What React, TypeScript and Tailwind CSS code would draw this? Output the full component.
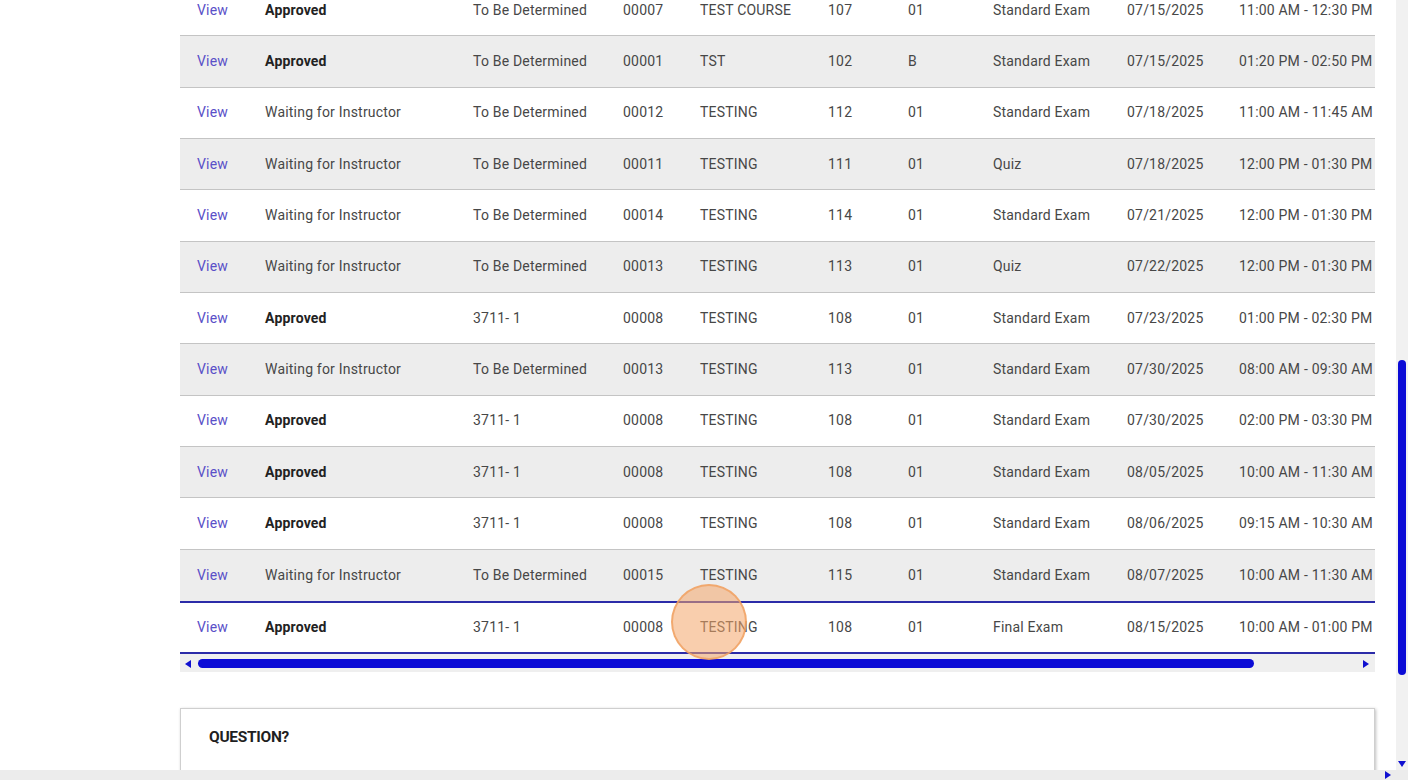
import React from "react";

type Row = {
  status: string;
  bold: boolean;
  loc: string;
  id: string;
  course: string;
  num: string;
  sec: string;
  type: string;
  date: string;
  time: string;
};

const rows: Row[] = [
  { status: "Approved", bold: true, loc: "To Be Determined", id: "00007", course: "TEST COURSE", num: "107", sec: "01", type: "Standard Exam", date: "07/15/2025", time: "11:00 AM - 12:30 PM" },
  { status: "Approved", bold: true, loc: "To Be Determined", id: "00001", course: "TST", num: "102", sec: "B", type: "Standard Exam", date: "07/15/2025", time: "01:20 PM - 02:50 PM" },
  { status: "Waiting for Instructor", bold: false, loc: "To Be Determined", id: "00012", course: "TESTING", num: "112", sec: "01", type: "Standard Exam", date: "07/18/2025", time: "11:00 AM - 11:45 AM" },
  { status: "Waiting for Instructor", bold: false, loc: "To Be Determined", id: "00011", course: "TESTING", num: "111", sec: "01", type: "Quiz", date: "07/18/2025", time: "12:00 PM - 01:30 PM" },
  { status: "Waiting for Instructor", bold: false, loc: "To Be Determined", id: "00014", course: "TESTING", num: "114", sec: "01", type: "Standard Exam", date: "07/21/2025", time: "12:00 PM - 01:30 PM" },
  { status: "Waiting for Instructor", bold: false, loc: "To Be Determined", id: "00013", course: "TESTING", num: "113", sec: "01", type: "Quiz", date: "07/22/2025", time: "12:00 PM - 01:30 PM" },
  { status: "Approved", bold: true, loc: "3711- 1", id: "00008", course: "TESTING", num: "108", sec: "01", type: "Standard Exam", date: "07/23/2025", time: "01:00 PM - 02:30 PM" },
  { status: "Waiting for Instructor", bold: false, loc: "To Be Determined", id: "00013", course: "TESTING", num: "113", sec: "01", type: "Standard Exam", date: "07/30/2025", time: "08:00 AM - 09:30 AM" },
  { status: "Approved", bold: true, loc: "3711- 1", id: "00008", course: "TESTING", num: "108", sec: "01", type: "Standard Exam", date: "07/30/2025", time: "02:00 PM - 03:30 PM" },
  { status: "Approved", bold: true, loc: "3711- 1", id: "00008", course: "TESTING", num: "108", sec: "01", type: "Standard Exam", date: "08/05/2025", time: "10:00 AM - 11:30 AM" },
  { status: "Approved", bold: true, loc: "3711- 1", id: "00008", course: "TESTING", num: "108", sec: "01", type: "Standard Exam", date: "08/06/2025", time: "09:15 AM - 10:30 AM" },
  { status: "Waiting for Instructor", bold: false, loc: "To Be Determined", id: "00015", course: "TESTING", num: "115", sec: "01", type: "Standard Exam", date: "08/07/2025", time: "10:00 AM - 11:30 AM" },
];

const last: Row = { status: "Approved", bold: true, loc: "3711- 1", id: "00008", course: "TESTING", num: "108", sec: "01", type: "Final Exam", date: "08/15/2025", time: "10:00 AM - 01:00 PM" };

const gridCols =
  "grid grid-cols-[85px_208px_150px_77px_128px_80px_85px_134px_112px_1fr] items-center";

function Cells({ r }: { r: Row }) {
  return (
    <>
      <div className="pl-[17px] text-[#5a50c8]">View</div>
      <div className={r.bold ? "font-bold text-[#222]" : ""}>{r.status}</div>
      <div>{r.loc}</div>
      <div>{r.id}</div>
      <div>{r.course}</div>
      <div>{r.num}</div>
      <div>{r.sec}</div>
      <div>{r.type}</div>
      <div>{r.date}</div>
      <div className="whitespace-nowrap">{r.time}</div>
    </>
  );
}

export default function App() {
  return (
    <div
      className="w-[1408px] h-[780px] overflow-hidden bg-white flex flex-col text-[14px] text-[#474747]"
      style={{ fontFamily: "Roboto, 'Liberation Sans', sans-serif" }}
    >
      <div className="flex flex-1 min-h-0">
        <div className="flex-1 min-w-0 overflow-hidden pl-[180px] pr-[21px]">
          <div className="-mt-[15px] tracking-[0.2px]">
            {rows.map((r, i) => (
              <div
                key={i}
                className={`${gridCols} h-[51.33px] border-b border-[#c4c4c4] ${
                  i % 2 === 1 ? "bg-[#ededed]" : "bg-white"
                } ${i === rows.length - 1 ? "border-b-0" : ""}`}
              >
                <Cells r={r} />
              </div>
            ))}
            <div className={`${gridCols} relative h-[53px] border-y-2 border-[#2b2ba8] bg-white`}>
              <Cells r={last} />
              <div className="absolute left-[491px] top-[-19px] w-[76px] h-[76px] rounded-full bg-[#f4a66a]/55 border-2 border-[#f0a060]/80" />
            </div>
            <div className="h-[18px] bg-[#efefef] flex items-center pl-[5px] pr-[4px] pt-[2px]">
              <svg width="6" height="8" viewBox="0 0 6 8" className="shrink-0">
                <path d="M6 0 L0 4 L6 8 Z" fill="#1010d0" />
              </svg>
              <div className="ml-[7px] w-[1056px] h-[9px] rounded-full bg-[#0b0bd6]" />
              <div className="flex-1" />
              <svg width="6" height="8" viewBox="0 0 6 8" className="shrink-0 mr-[2px]">
                <path d="M0 0 L6 4 L0 8 Z" fill="#1010d0" />
              </svg>
            </div>
            <div className="mt-[36px] h-[80px] border border-[#cfcfcf] shadow-[1px_1px_3px_rgba(0,0,0,0.25)] px-[28px] pt-[17px]">
              <div className="font-bold text-[#1f1f1f] text-[15.5px] tracking-[-0.3px]">
                QUESTION?
              </div>
            </div>
          </div>
        </div>
        <div className="w-[12px] bg-[#f1f1f1] flex flex-col items-center">
          <div className="h-[360px]" />
          <div className="w-[8px] h-[315px] rounded-full bg-[#0b0bd6]" />
          <div className="flex-1" />
          <svg width="8" height="6" viewBox="0 0 8 6" className="mb-[3px]">
            <path d="M0 0 L8 0 L4 6 Z" fill="#1010d0" />
          </svg>
        </div>
      </div>
      <div className="h-[10px] bg-[#ececec] flex items-center justify-end pr-[17px]">
        <svg width="6" height="8" viewBox="0 0 6 8">
          <path d="M0 0 L6 4 L0 8 Z" fill="#1010d0" />
        </svg>
      </div>
    </div>
  );
}
